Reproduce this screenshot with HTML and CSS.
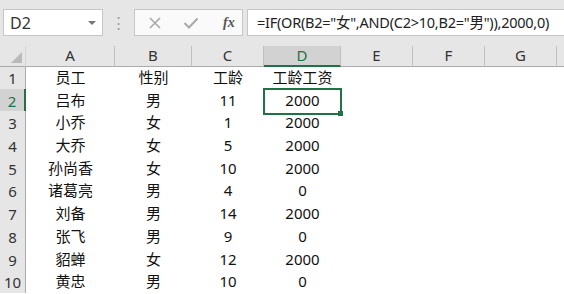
FILE: index.html
```html
<!DOCTYPE html>
<html lang="zh">
  <head>
    <meta charset="UTF-8" />
    <title>工龄工资</title>
    <link rel="stylesheet" href="styles.css">
  </head>
  <body>
    <div class="toolbar">
      <div class="namebox">
        <span>D2</span>
        <span class="arrow"></span>
      </div>
      <div class="grip">⋮</div>
      <div class="buttons">
        <svg class="icon" width="14" height="14" viewBox="0 0 14 14"><path d="M2 2 L12 12 M12 2 L2 12" stroke="#a9a9a9" stroke-width="1.6" fill="none"/></svg>
        <svg class="icon" width="16" height="14" viewBox="0 0 16 14"><path d="M1.5 7 L6 11.5 L14.5 2.5" stroke="#a9a9a9" stroke-width="2" fill="none"/></svg>
        <span class="fx">fx</span>
      </div>
      <div class="formula">=IF(OR(B2="女",AND(C2&gt;10,B2="男")),2000,0)</div>
    </div>

    <div class="sheet">
      <div class="row head">
        <div class="corner"><span class="tri"></span></div>
        <div class="col">A</div>
        <div class="col">B</div>
        <div class="col">C</div>
        <div class="col active">D</div>
        <div class="col">E</div>
        <div class="col">F</div>
        <div class="col">G</div>
        <div class="col last"></div>
      </div>
      <div id="rows"></div>
    </div>

    <script>
      const data = [
        ['员工', '性别', '工龄', '工龄工资'],
        ['吕布', '男', '11', '2000'],
        ['小乔', '女', '1', '2000'],
        ['大乔', '女', '5', '2000'],
        ['孙尚香', '女', '10', '2000'],
        ['诸葛亮', '男', '4', '0'],
        ['刘备', '男', '14', '2000'],
        ['张飞', '男', '9', '0'],
        ['貂蝉', '女', '12', '2000'],
        ['黄忠', '男', '10', '0'],
      ];
      const rowsEl = document.getElementById('rows');

      data.forEach((cells, i) => {
        const row = document.createElement('div');
        row.className = 'row';
        const num = document.createElement('div');
        num.className = 'num' + (i === 1 ? ' active' : '');
        num.textContent = i + 1;
        row.appendChild(num);
        for (let c = 0; c < 8; c++) {
          const cell = document.createElement('div');
          cell.className = 'cell';
          if (i === 1 && c === 3) cell.className += ' selected';
          cell.textContent = cells[c] || '';
          row.appendChild(cell);
        }
        rowsEl.appendChild(row);
      });
    </script>
  </body>
</html>
```

FILE: styles.css
```css
body {
  margin: 0;
  background: #fff;
  font-family: "Noto Sans", "Noto Sans CJK SC", sans-serif;
  color: #222;
  overflow: hidden;
}

.toolbar {
  height: 46px;
  background: #e6e6e6;
  display: flex;
  align-items: flex-start;
  padding-top: 9px;
  box-sizing: border-box;
}

.namebox {
  margin-left: 3px;
  width: 100px;
  height: 27px;
  box-sizing: border-box;
  background: #fff;
  border: 1px solid #c6c6c6;
  display: flex;
  align-items: center;
  justify-content: space-between;
  padding: 0 6px 0 6px;
  font-size: 16px;
  color: #333;
}

.arrow {
  width: 0;
  height: 0;
  border-left: 4px solid transparent;
  border-right: 4px solid transparent;
  border-top: 4px solid #777;
}

.grip {
  width: 31px;
  text-align: center;
  color: #9a9a9a;
  font-size: 15px;
  line-height: 27px;
}

.buttons {
  width: 109px;
  height: 27px;
  box-sizing: border-box;
  background: #fafafa;
  border: 1px solid #c6c6c6;
  display: flex;
  align-items: center;
  padding-left: 13px;
  gap: 21px;
}

.fx {
  font-family: "Liberation Serif", serif;
  font-style: italic;
  font-weight: bold;
  font-size: 14px;
  color: #555;
  margin-left: 3px;
}

.formula {
  flex: 1;
  margin-left: 4px;
  height: 27px;
  box-sizing: border-box;
  background: #fff;
  border: 1px solid #c6c6c6;
  border-right: none;
  font-size: 14.5px;
  letter-spacing: -0.25px;
  line-height: 25px;
  padding-left: 9px;
  white-space: nowrap;
  color: #222;
}

.row {
  display: grid;
  grid-template-columns: 26px 89px 77px 72px 77px 72px 72px 72px 1fr;
  height: 22.7px;
}

.row.head {
  height: 20px;
  background: #e6e6e6;
}

.corner,
.col {
  box-sizing: border-box;
  border-bottom: 1px solid #ababab;
}

.corner {
  border-right: 1px solid #d4d4d4;
  position: relative;
}

.tri {
  position: absolute;
  right: 3px;
  bottom: 3px;
  width: 0;
  height: 0;
  border-left: 11px solid transparent;
  border-bottom: 11px solid #b9b9b9;
}

.col {
  border-right: 1px solid #c0c0c0;
  text-align: center;
  font-size: 15px;
  line-height: 19px;
  color: #333;
}

.col.last {
  border-right: none;
}

.col.active {
  background: #d2d2d2;
  border-bottom: 2px solid #217346;
  color: #217346;
}

.num {
  box-sizing: border-box;
  background: #e6e6e6;
  border-right: 1px solid #ababab;
  border-bottom: 1px solid #c8c8c8;
  text-align: center;
  font-size: 15px;
  line-height: 24px;
  color: #333;
}

.num.active {
  background: #d2d2d2;
  border-right: 2px solid #217346;
  color: #217346;
}

.cell {
  text-align: center;
  font-size: 15px;
  line-height: 22px;
  color: #111;
  white-space: nowrap;
}

.cell.selected {
  position: relative;
  outline: 2px solid #217346;
  outline-offset: -1px;
}

.cell.selected::after {
  content: "";
  position: absolute;
  right: -3px;
  bottom: -3px;
  width: 5px;
  height: 5px;
  background: #217346;
  border: 1px solid #fff;
  border-top: none;
  border-left: none;
}
```
